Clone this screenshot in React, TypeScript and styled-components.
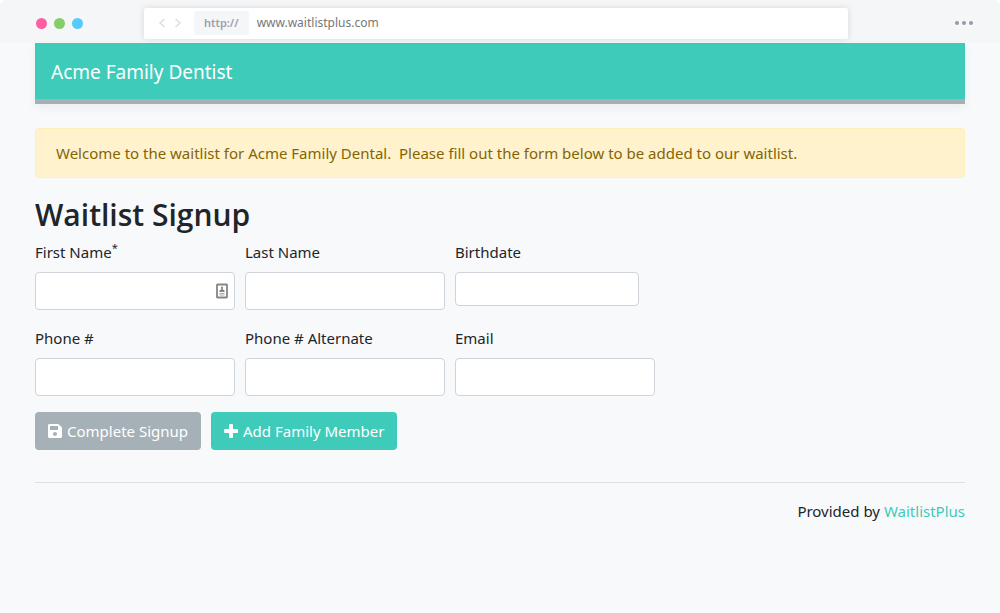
import React from "react";
import styled, { createGlobalStyle } from "styled-components";

const GlobalStyle = createGlobalStyle`
  *, *::before, *::after { box-sizing: border-box; }
  body {
    margin: 0;
    background: #f8f9fb;
    color: #212529;
    font-family: "Noto Sans", "Open Sans", sans-serif;
    font-size: 15px;
    line-height: 24px;
  }
`;

const Chrome = styled.div`
  background: #fff;
`;

const ChromeBar = styled.div`
  display: grid;
  grid-template-columns: 108px minmax(0, 704px) 1fr;
  align-items: center;
  height: 43px;
  padding: 3px 27px 0 36px;
  background: #f5f6f8;
  border-radius: 6px 6px 0 0;
`;

const Lights = styled.div`
  display: flex;
  gap: 7px;
`;

const Light = styled.span<{ $color: string }>`
  width: 11px;
  height: 11px;
  border-radius: 50%;
  background: ${(p) => p.$color};
`;

const AddressBar = styled.div`
  display: flex;
  align-items: center;
  height: 31px;
  padding: 0 14px;
  background: #fff;
  border-radius: 2px;
  box-shadow: 0 0 6px rgba(0, 0, 0, 0.13);
`;

const NavButton = styled.button`
  display: flex;
  width: 16px;
  padding: 0;
  border: 0;
  background: none;
  color: #dcdee1;
`;

const Scheme = styled.span`
  margin: 0 8px 0 4px;
  padding: 0 10px;
  border-radius: 2px;
  background: #f5f6f8;
  color: #98a1ab;
  font-size: 11px;
  font-weight: 600;
`;

const Url = styled.span`
  color: #777;
  font-size: 12px;
`;

const MenuButton = styled.button`
  display: flex;
  gap: 3px;
  justify-self: end;
  padding: 0;
  border: 0;
  background: none;
`;

const MenuDot = styled.span`
  width: 4px;
  height: 4px;
  border-radius: 50%;
  background: #929ba7;
`;

const Page = styled.div`
  padding: 0 35px;
`;

const Navbar = styled.header`
  padding: 15px 16px 13px;
  background: #3ecbba;
  border-bottom: 5px solid #a5b1b7;
  box-shadow: 0 4px 10px rgba(0, 0, 0, 0.05);
  color: #fff;
  font-size: 19px;
  line-height: 28px;
`;

const Alert = styled.div`
  margin: 24px 0 16px;
  padding: 12px 20px;
  border: 1px solid #ffeeba;
  border-radius: 4px;
  background: #fff2cd;
  color: #856404;
  white-space: pre-wrap;
`;

const Title = styled.h1`
  margin: 0 0 4px;
  font-family: "Open Sans", "Noto Sans", sans-serif;
  font-size: 30px;
  font-weight: 600;
  line-height: 42px;
`;

const FieldRow = styled.div`
  display: flex;
  flex-wrap: wrap;
  align-items: flex-start;
  gap: 10px;
  margin-bottom: 16px;
`;

const Field = styled.div`
  position: relative;
  display: flex;
  flex-direction: column;
  gap: 8px;
`;

const Label = styled.label`
  sup {
    font-size: 11px;
    line-height: 0;
  }
`;

const Input = styled.input<{ $compact?: boolean }>`
  width: ${(p) => (p.$compact ? 184 : 200)}px;
  height: ${(p) => (p.$compact ? 34 : 38)}px;
  padding: 6px 12px;
  border: 1px solid #ced4da;
  border-radius: 4px;
  background: #fff;
  color: #495057;
  font: inherit;
`;

const AutofillIcon = styled.svg`
  position: absolute;
  right: 7px;
  bottom: 11px;
`;

const Actions = styled.div`
  display: flex;
  flex-wrap: wrap;
  gap: 10px;
`;

const Button = styled.button<{ $primary?: boolean }>`
  display: flex;
  align-items: center;
  gap: 5px;
  padding: 6px 12px;
  border: 1px solid transparent;
  border-radius: 4px;
  background: ${(p) => (p.$primary ? "#3ecbba" : "#a5b1b7")};
  background-clip: border-box;
  color: #fff;
  font: inherit;
  white-space: nowrap;
`;

const Footer = styled.footer`
  margin-top: 32px;
  padding-top: 16px;
  border-top: 1px solid #dfe0e3;
  text-align: right;
`;

const FooterLink = styled.a`
  color: #3ecbba;
  text-decoration: none;
`;

type FieldSpec = {
  id: string;
  label: string;
  type?: string;
  required?: boolean;
  compact?: boolean;
  autofill?: boolean;
};

const rows: FieldSpec[][] = [
  [
    { id: "first-name", label: "First Name", required: true, autofill: true },
    { id: "last-name", label: "Last Name" },
    { id: "birthdate", label: "Birthdate", compact: true },
  ],
  [
    { id: "phone", label: "Phone #", type: "tel" },
    { id: "phone-alt", label: "Phone # Alternate", type: "tel" },
    { id: "email", label: "Email", type: "email" },
  ],
];

const SAVE_PATH =
  "M433.941 129.941l-83.882-83.882A48 48 0 0 0 316.118 32H48C21.490 32 0 53.490 0 80v352c0 26.510 21.490 48 48 48h352c26.510 0 48-21.490 48-48V163.882a48 48 0 0 0-14.059-33.941zM224 416c-35.346 0-64-28.654-64-64 0-35.346 28.654-64 64-64s64 28.654 64 64c0 35.346-28.654 64-64 64zm96-304.520V212c0 6.627-5.373 12-12 12H76c-6.627 0-12-5.373-12-12V108c0-6.627 5.373-12 12-12h228.520c3.183 0 6.235 1.264 8.485 3.515l3.480 3.480A11.996 11.996 0 0 1 320 111.480z";
const PLUS_PATH =
  "M448 294.200v-76.400c0-13.300-10.700-24-24-24H286.200V56c0-13.300-10.700-24-24-24h-76.400c-13.300 0-24 10.700-24 24v137.800H24c-13.300 0-24 10.700-24 24v76.400c0 13.300 10.700 24 24 24h137.800V456c0 13.300 10.700 24 24 24h76.400c13.300 0 24-10.700 24-24V318.200H424c13.300 0 24-10.700 24-24z";

function ButtonIcon({ d }: { d: string }) {
  return (
    <svg width="14" height="16" viewBox="0 0 448 512" fill="currentColor" aria-hidden="true">
      <path d={d} />
    </svg>
  );
}

function Chevron({ d }: { d: string }) {
  return (
    <svg width="8" height="10" viewBox="0 0 8 10" fill="none" stroke="currentColor" strokeWidth="1.5" aria-hidden="true">
      <path d={d} />
    </svg>
  );
}

export default function App() {
  return (
    <>
      <GlobalStyle />
      <Chrome>
        <ChromeBar>
          <Lights>
            <Light $color="#ff5fa2" />
            <Light $color="#83cf66" />
            <Light $color="#52ccff" />
          </Lights>
          <AddressBar>
            <NavButton aria-label="Back">
              <Chevron d="M6.500 1 2 5l4.500 4" />
            </NavButton>
            <NavButton aria-label="Forward">
              <Chevron d="M1.500 1 6 5l-4.500 4" />
            </NavButton>
            <Scheme>http://</Scheme>
            <Url>www.waitlistplus.com</Url>
          </AddressBar>
          <MenuButton aria-label="Menu">
            <MenuDot />
            <MenuDot />
            <MenuDot />
          </MenuButton>
        </ChromeBar>
      </Chrome>
      <Page>
        <Navbar>Acme Family Dentist</Navbar>
        <main>
          <Alert role="status">
            {"Welcome to the waitlist for Acme Family Dental.  Please fill out the form below to be added to our waitlist."}
          </Alert>
          <Title>Waitlist Signup</Title>
          <form onSubmit={(e) => e.preventDefault()}>
            {rows.map((fields) => (
              <FieldRow key={fields[0].id}>
                {fields.map((f) => (
                  <Field key={f.id}>
                    <Label htmlFor={f.id}>
                      {f.label}
                      {f.required && <sup>*</sup>}
                    </Label>
                    <Input id={f.id} type={f.type ?? "text"} required={f.required} $compact={f.compact} />
                    {f.autofill && (
                      <AutofillIcon width="12" height="16" viewBox="0 0 12 16" aria-hidden="true">
                        <rect x="1" y="1.500" width="10" height="13" rx="0.500" fill="#fff" stroke="#858585" strokeWidth="1.800" />
                        <path d="M6 3.500c1 0 1.300 1 .8 2.200v.8l1.700.8V9h-5V7.300l1.700-.8v-.8C4.700 4.500 5 3.500 6 3.500z" fill="#858585" />
                        <path d="M3.500 10.500h5M3.500 12h5" stroke="#aaa" strokeWidth="1" />
                      </AutofillIcon>
                    )}
                  </Field>
                ))}
              </FieldRow>
            ))}
            <Actions>
              <Button type="submit">
                <ButtonIcon d={SAVE_PATH} />
                Complete Signup
              </Button>
              <Button type="button" $primary>
                <ButtonIcon d={PLUS_PATH} />
                Add Family Member
              </Button>
            </Actions>
          </form>
        </main>
        <Footer>
          Provided by <FooterLink href="#">WaitlistPlus</FooterLink>
        </Footer>
      </Page>
    </>
  );
}
